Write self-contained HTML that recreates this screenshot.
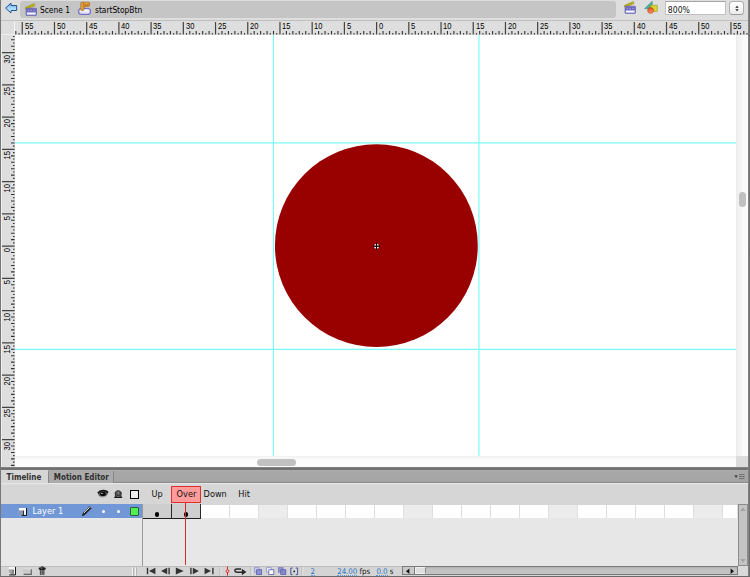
<!DOCTYPE html>
<html lang="en">
<head>
<meta charset="utf-8">
<title>startStopBtn</title>
<style>
html,body{margin:0;padding:0;}
body{width:750px;height:577px;overflow:hidden;position:relative;background:#dedede;
  font-family:"DejaVu Sans Condensed","DejaVu Sans","Liberation Sans",sans-serif;font-size:8.3px;color:#222;}
.abs,#app div,#app span,#app svg{position:absolute;}
#app{position:absolute;left:0;top:0;width:750px;height:577px;overflow:hidden;}

/* toolbar */
#toolbar{left:0;top:0;width:750px;height:20px;background:#dedede;}
#crumb{left:20.3px;top:1px;width:595.7px;height:16.6px;background:#c5c5c5;border-radius:3px;}
.tbtxt{top:5.2px;font-size:8.3px;line-height:10px;white-space:nowrap;color:#000;}
#tbline{left:0;top:20px;width:750px;height:1px;background:#c0c0c0;}
#zoomin{left:665.4px;top:1px;width:61px;height:14px;background:#fff;box-sizing:border-box;border:1px solid #c2c2c2;border-top-color:#a6a6a6;}
#zoomtx{left:667.8px;top:4.6px;font-size:8.6px;line-height:10px;color:#111;}
#stepper{left:729.4px;top:1px;width:14.2px;height:14.2px;box-sizing:border-box;border:1px solid #b0b0b0;border-bottom-color:#9c9c9c;border-radius:3.5px;background:linear-gradient(#ffffff,#ececec);}

/* rulers */
#hruler{left:14.5px;top:21px;width:733.5px;height:14px;background:#dedede;}
#rcorner{left:1px;top:21px;width:12.5px;height:13.3px;background:#dedede;}
#rcw1{left:13.5px;top:21px;width:1px;height:14px;background:#f4f4f4;}
#rcw2{left:1px;top:34px;width:13.5px;height:1px;background:#efefef;}
#vrw{left:1px;top:35px;width:1px;height:432px;background:#efefef;}
#vruler{left:1px;top:35px;width:13.5px;height:432px;background:#dedede;}
.hl{top:22px;font-family:"Liberation Sans",sans-serif;font-size:8.4px;line-height:9px;color:#000;transform-origin:0 0;transform:scaleX(0.9);}
.vl{left:3.3px;white-space:nowrap;font-family:"Liberation Sans",sans-serif;font-size:8.4px;line-height:9px;color:#000;}
.vl{transform-origin:0 0;transform:rotate(-90deg) scaleX(0.9) translateX(-100%);}

/* stage */
#stage{left:14.5px;top:35px;width:721.5px;height:421px;background:#fff;overflow:hidden;}
.gv{top:35px;width:1.3px;height:420.7px;background:#8ffcfc;}
.gh{left:14.5px;width:721.5px;height:1.2px;background:#8ffcfc;}
#vscroll{left:736px;top:35px;width:12px;height:421px;background:linear-gradient(90deg,#ececec,#fafafa 60%,#fcfcfc);}
#hscroll{left:14.5px;top:456px;width:721.5px;height:11px;background:linear-gradient(#f1f1f1 0,#fafafa 3px,#fdfdfd 7px,#fbfbfb 11px);}
#sccorner{left:736px;top:456px;width:12px;height:11px;background:#dcdcdc;}
.thumb{background:#c1c1c1;border-radius:4px;}

/* window borders */
#bl{left:0;top:0;width:1.1px;height:577px;background:#777;}
#br{left:748px;top:0;width:2px;height:577px;background:linear-gradient(90deg,#8a8a8a,#666);}
#bb{left:0;top:576px;width:750px;height:1px;background:#6a6a6a;}

/* timeline */
#sep{left:0;top:467px;width:750px;height:3px;background:linear-gradient(#8c8c8c,#686868 60%,#7c7c7c);}
#tabbar{left:1px;top:470px;width:747px;height:13.2px;background:linear-gradient(#9a9a9a 0,#b2b2b2 0.7px,#a8a8a8 1.6px,#a5a5a5 11.4px,#8d8d8d 12.2px,#8d8d8d 13.2px);}
#tab1{left:1px;top:470px;width:47px;height:14.6px;background:#d6d6d6;}
#tab2{left:48px;top:470.6px;width:66.4px;height:12.1px;background:#ababab;border-right:1px solid #888;border-left:1px solid #888;box-sizing:border-box;}
.tabtx{top:473.1px;font-family:"DejaVu Sans Condensed","DejaVu Sans",sans-serif;font-weight:bold;font-size:8px;line-height:10px;color:#303030;white-space:nowrap;}
#panel{left:1px;top:483.2px;width:747px;height:82.8px;background:linear-gradient(#e6e6e6 0,#e6e6e6 1.2px,#d6d6d6 1.6px,#d6d6d6 100%);}
#lempty{left:1px;top:518px;width:141px;height:48px;background:#e7e7e7;}
#fempty{left:143px;top:518px;width:595px;height:48px;background:#e7e7e7;}
#vdiv{left:142px;top:504px;width:1px;height:72px;background:#9a9a9a;}
#layer{left:1px;top:504.3px;width:141.3px;height:13.7px;background:#7197d6;}
#layertx{left:32.5px;top:506px;font-family:"DejaVu Sans","Liberation Sans",sans-serif;font-size:8.2px;line-height:11px;color:#fff;white-space:nowrap;}
#framerow{left:142.5px;top:504.6px;width:595.1px;height:13.5px;background:#fff;}
.fr,.fr5{top:504.6px;height:13.5px;box-sizing:border-box;border-right:1px solid #dedede;background:#fff;}
.fr5{background:#ececec;}
.kf{top:504.4px;height:14.2px;box-sizing:border-box;background:#cecece;border-right:1.2px solid #2a2a2a;border-bottom:1px solid #1e1e1e;}
.kdot{width:4.2px;height:4.2px;border-radius:50%;background:#000;top:512.4px;}
.flab{top:489.1px;font-family:"DejaVu Sans","Liberation Sans",sans-serif;font-size:8.2px;line-height:11px;color:#111;white-space:nowrap;}
#overbox{left:170.9px;top:486px;width:29.8px;height:16.5px;box-sizing:border-box;background:#ff9b9b;border:1px solid #de2f2f;}
#playhead{left:185.2px;top:502.5px;width:1px;height:62.5px;background:#d42a2a;}
#botbar{left:1px;top:566px;width:747px;height:9.5px;background:#d4d4d4;border-top:0.7px solid #bdbdbd;box-sizing:border-box;}
.stx{top:567.7px;font-size:7.8px;line-height:7.6px;white-space:nowrap;color:#222;}
.blue{color:#2b78ca;border-bottom:1px dotted #5a9ade;}
#tvscroll{left:738.3px;top:504px;width:9.7px;height:61.6px;box-sizing:border-box;background:#c4c4c4;border:1px solid #8c8c8c;}
#thscroll{left:402px;top:565.7px;width:335.6px;height:9.8px;box-sizing:border-box;background:linear-gradient(#adadad,#c2c2c2 2px,#c2c2c2);border:1px solid #7a7a7a;}
#thl{left:403px;top:566.7px;width:11.5px;height:7.8px;background:#c9c9c9;border-right:1px solid #7a7a7a;box-sizing:border-box;}
#thumb2{left:414.5px;top:566.7px;width:11.2px;height:7.8px;background:#dddddd;border:1px solid #f0f0f0;border-right-color:#8a8a8a;box-sizing:border-box;}
#tcorner{left:738px;top:566px;width:10px;height:9.5px;background:#dadada;}
</style>
</head>
<body>
<div id="app">

<!-- ===== toolbar ===== -->
<div id="toolbar"></div>
<div id="crumb"></div>
<svg id="backarrow" style="left:4px;top:1px" width="15" height="14" viewBox="0 0 15 14">
  <defs><linearGradient id="gArrow" x1="0" y1="0" x2="0" y2="1"><stop offset="0" stop-color="#63a7ea"/><stop offset="0.55" stop-color="#a8dcfb"/><stop offset="1" stop-color="#c6f2ff"/></linearGradient></defs>
  <path d="M1.6 7.1 L6.9 2.1 L7.2 4.5 L12.7 4.5 L12.7 9.5 L7.2 9.5 L6.9 11.9 Z" fill="url(#gArrow)" stroke="#244e8c" stroke-width="1" stroke-linejoin="round"/>
</svg>
<svg id="clap1" style="left:24.7px;top:2.6px" width="13" height="14" viewBox="0 0 13 14">
  <path d="M0.2 4.5 L9.3 0.5 L10.1 2.5 L1 6.5 Z" fill="#c7bb1d" stroke="#8c8610" stroke-width="0.5"/>
  <path d="M2.6 3.6 L3.3 5.3 M4.8 2.6 L5.5 4.3 M7 1.7 L7.7 3.4" stroke="#9c9414" stroke-width="0.7"/>
  <rect x="1" y="5.2" width="10.5" height="7.2" rx="0.7" fill="#7876c8" stroke="#5a58a8" stroke-width="0.6"/>
  <rect x="1.8" y="6.5" width="8.9" height="1.9" fill="#6563b6"/>
  <path d="M2.6 7 H4.2 V8 H2.6 Z M5.4 7 H7 V8 H5.4 Z M8.2 7 H9.8 V8 H8.2 Z" fill="#9d9be0"/>
  <rect x="1.9" y="9.5" width="8.7" height="2.1" fill="#f7f7ff"/>
</svg>
<span class="tbtxt" style="left:40px">Scene 1</span>
<svg id="btnicon" style="left:72px;top:0" width="30" height="18" viewBox="72 0 30 18">
  <defs><linearGradient id="gBtn" x1="0" y1="0" x2="0" y2="1"><stop offset="0" stop-color="#ffffff"/><stop offset="1" stop-color="#d6d6f6"/></linearGradient></defs>
  <rect x="78.7" y="8.6" width="11.7" height="5.8" rx="2.3" fill="url(#gBtn)" stroke="#7573c6" stroke-width="1.25"/>
  <path d="M80.8 2.7 Q81 2.1 82 2.2 L88.8 2.2 Q89.8 2.4 89.6 3.6 L89.6 5.4 Q89.4 6.6 88 6.6 L84.4 6.8 L83.8 10 Q83.4 10.8 82.4 10.8 L81.4 10.6 Q80.8 10.2 80.8 9.4 Z" fill="#d38c2a" stroke="#98590f" stroke-width="0.5"/>
  <path d="M82 3 V9.6 M84.4 3.2 H88.4" stroke="#efbf6c" stroke-width="0.7" fill="none"/>
  <path d="M83.6 3 V5.6 M85.6 4.2 V6.2 M87.6 4.2 V6.2" stroke="#a4661a" stroke-width="0.5" fill="none"/>
</svg>
<span class="tbtxt" style="left:95px">startStopBtn</span>

<svg id="clap2" style="left:624.2px;top:0.8px" width="13" height="14" viewBox="0 0 13 14">
  <path d="M0.2 4.5 L9.3 0.5 L10.1 2.5 L1 6.5 Z" fill="#c7bb1d" stroke="#8c8610" stroke-width="0.5"/>
  <path d="M2.6 3.6 L3.3 5.3 M4.8 2.6 L5.5 4.3 M7 1.7 L7.7 3.4" stroke="#9c9414" stroke-width="0.7"/>
  <rect x="1" y="5.2" width="10.5" height="7.2" rx="0.7" fill="#7876c8" stroke="#5a58a8" stroke-width="0.6"/>
  <rect x="1.8" y="6.5" width="8.9" height="1.9" fill="#6563b6"/>
  <path d="M2.6 7 H4.2 V8 H2.6 Z M5.4 7 H7 V8 H5.4 Z M8.2 7 H9.8 V8 H8.2 Z" fill="#9d9be0"/>
  <rect x="1.9" y="9.5" width="8.7" height="2.1" fill="#f7f7ff"/>
</svg>
<svg id="shapes" style="left:643px;top:-0.1px" width="16" height="16" viewBox="0 0 16 16">
  <defs><linearGradient id="gCirc" x1="0" y1="0" x2="0" y2="1"><stop offset="0" stop-color="#e44a1e"/><stop offset="1" stop-color="#f59468"/></linearGradient></defs>
  <path d="M1.6 8.6 L9.2 1.4 L9.2 8.6 Z" fill="#3fb59a" stroke="#2a8a78" stroke-width="0.6"/>
  <rect x="7.4" y="5.2" width="6.8" height="6.4" fill="#d8d432" stroke="#9a9618" stroke-width="0.6"/>
  <circle cx="7.6" cy="10.4" r="3" fill="url(#gCirc)" stroke="#b83c18" stroke-width="0.5"/>
</svg>
<div id="zoomin"></div>
<span id="zoomtx">800%</span>
<div id="stepper"></div>
<svg style="left:733.5px;top:4.6px" width="6" height="7" viewBox="0 0 6 7"><path d="M3 0.7 L4.7 2.7 H1.3 Z M3 6.3 L4.7 4.3 H1.3 Z" fill="#222"/></svg>
<div id="tbline"></div>

<!-- ===== rulers ===== -->
<div id="hruler"></div>
<div id="rcorner"></div><div id="rcw1"></div><div id="rcw2"></div>
<div id="vruler"></div><div id="vrw"></div>
<svg id="hticks" style="left:0;top:0" width="750" height="36" viewBox="0 0 750 36">
  <path d="M15.82 31V34.6M19.04 33V34.6M25.48 33V34.6M28.71 31V34.6M31.93 33V34.6M35.15 31V34.6M38.37 33V34.6M41.59 31V34.6M44.81 33V34.6M48.03 31V34.6M51.25 33V34.6M57.7 33V34.6M60.92 31V34.6M64.14 33V34.6M67.36 31V34.6M70.58 33V34.6M73.8 31V34.6M77.02 33V34.6M80.25 31V34.6M83.47 33V34.6M89.91 33V34.6M93.13 31V34.6M96.35 33V34.6M99.57 31V34.6M102.79 33V34.6M106.02 31V34.6M109.24 33V34.6M112.46 31V34.6M115.68 33V34.6M122.12 33V34.6M125.34 31V34.6M128.56 33V34.6M131.79 31V34.6M135.01 33V34.6M138.23 31V34.6M141.45 33V34.6M144.67 31V34.6M147.89 33V34.6M154.33 33V34.6M157.56 31V34.6M160.78 33V34.6M164 31V34.6M167.22 33V34.6M170.44 31V34.6M173.66 33V34.6M176.88 31V34.6M180.1 33V34.6M186.55 33V34.6M189.77 31V34.6M192.99 33V34.6M196.21 31V34.6M199.43 33V34.6M202.65 31V34.6M205.87 33V34.6M209.1 31V34.6M212.32 33V34.6M218.76 33V34.6M221.98 31V34.6M225.2 33V34.6M228.42 31V34.6M231.64 33V34.6M234.87 31V34.6M238.09 33V34.6M241.31 31V34.6M244.53 33V34.6M250.97 33V34.6M254.19 31V34.6M257.41 33V34.6M260.63 31V34.6M263.86 33V34.6M267.08 31V34.6M270.3 33V34.6M273.52 31V34.6M276.74 33V34.6M283.18 33V34.6M286.41 31V34.6M289.63 33V34.6M292.85 31V34.6M296.07 33V34.6M299.29 31V34.6M302.51 33V34.6M305.73 31V34.6M308.95 33V34.6M315.4 33V34.6M318.62 31V34.6M321.84 33V34.6M325.06 31V34.6M328.28 33V34.6M331.5 31V34.6M334.72 33V34.6M337.95 31V34.6M341.17 33V34.6M347.61 33V34.6M350.83 31V34.6M354.05 33V34.6M357.27 31V34.6M360.49 33V34.6M363.72 31V34.6M366.94 33V34.6M370.16 31V34.6M373.38 33V34.6M379.82 33V34.6M383.04 31V34.6M386.26 33V34.6M389.49 31V34.6M392.71 33V34.6M395.93 31V34.6M399.15 33V34.6M402.37 31V34.6M405.59 33V34.6M412.03 33V34.6M415.25 31V34.6M418.48 33V34.6M421.7 31V34.6M424.92 33V34.6M428.14 31V34.6M431.36 33V34.6M434.58 31V34.6M437.8 33V34.6M444.25 33V34.6M447.47 31V34.6M450.69 33V34.6M453.91 31V34.6M457.13 33V34.6M460.35 31V34.6M463.57 33V34.6M466.8 31V34.6M470.02 33V34.6M476.46 33V34.6M479.68 31V34.6M482.9 33V34.6M486.12 31V34.6M489.34 33V34.6M492.57 31V34.6M495.79 33V34.6M499.01 31V34.6M502.23 33V34.6M508.67 33V34.6M511.89 31V34.6M515.11 33V34.6M518.34 31V34.6M521.56 33V34.6M524.78 31V34.6M528 33V34.6M531.22 31V34.6M534.44 33V34.6M540.88 33V34.6M544.11 31V34.6M547.33 33V34.6M550.55 31V34.6M553.77 33V34.6M556.99 31V34.6M560.21 33V34.6M563.43 31V34.6M566.65 33V34.6M573.1 33V34.6M576.32 31V34.6M579.54 33V34.6M582.76 31V34.6M585.98 33V34.6M589.2 31V34.6M592.42 33V34.6M595.64 31V34.6M598.87 33V34.6M605.31 33V34.6M608.53 31V34.6M611.75 33V34.6M614.97 31V34.6M618.19 33V34.6M621.41 31V34.6M624.64 33V34.6M627.86 31V34.6M631.08 33V34.6M637.52 33V34.6M640.74 31V34.6M643.96 33V34.6M647.18 31V34.6M650.41 33V34.6M653.63 31V34.6M656.85 33V34.6M660.07 31V34.6M663.29 33V34.6M669.73 33V34.6M672.96 31V34.6M676.18 33V34.6M679.4 31V34.6M682.62 33V34.6M685.84 31V34.6M689.06 33V34.6M692.28 31V34.6M695.5 33V34.6M701.95 33V34.6M705.17 31V34.6M708.39 33V34.6M711.61 31V34.6M714.83 33V34.6M718.05 31V34.6M721.27 33V34.6M724.5 31V34.6M727.72 33V34.6M734.16 33V34.6M737.38 31V34.6M740.6 33V34.6M743.82 31V34.6M747.04 33V34.6" stroke="#333" stroke-width="1.1" fill="none"/>
  <path d="M22.26 22V34.6M54.48 22V34.6M86.69 22V34.6M118.9 22V34.6M151.11 22V34.6M183.33 22V34.6M215.54 22V34.6M247.75 22V34.6M279.96 22V34.6M312.18 22V34.6M344.39 22V34.6M376.6 22V34.6M408.81 22V34.6M441.03 22V34.6M473.24 22V34.6M505.45 22V34.6M537.66 22V34.6M569.88 22V34.6M602.09 22V34.6M634.3 22V34.6M666.51 22V34.6M698.73 22V34.6M730.94 22V34.6" stroke="#444" stroke-width="1.2" fill="none"/>
</svg>
<span class="hl" style="left:24.56px">55</span><span class="hl" style="left:56.78px">50</span><span class="hl" style="left:88.99px">45</span><span class="hl" style="left:121.2px">40</span><span class="hl" style="left:153.41px">35</span><span class="hl" style="left:185.63px">30</span><span class="hl" style="left:217.84px">25</span><span class="hl" style="left:250.05px">20</span><span class="hl" style="left:282.26px">15</span><span class="hl" style="left:314.48px">10</span><span class="hl" style="left:346.69px">5</span><span class="hl" style="left:378.9px">0</span><span class="hl" style="left:411.11px">5</span><span class="hl" style="left:443.33px">10</span><span class="hl" style="left:475.54px">15</span><span class="hl" style="left:507.75px">20</span><span class="hl" style="left:539.96px">25</span><span class="hl" style="left:572.17px">30</span><span class="hl" style="left:604.39px">35</span><span class="hl" style="left:636.6px">40</span><span class="hl" style="left:668.81px">45</span><span class="hl" style="left:701.02px">50</span><span class="hl" style="left:733.24px">55</span>

<!-- ===== stage ===== -->
<div id="stage"></div>
<svg id="guides" style="left:14px;top:35px" width="722" height="421" viewBox="14 35 722 421">
  <path d="M273.47 35V455.7M478.93 35V455.7M14.5 142.9H736M14.5 349.3H736" stroke="#7cf8f8" stroke-width="1.15" fill="none"/>
</svg>
<svg id="art" style="left:264px;top:134px" width="224" height="224" viewBox="264 134 224 224">
  <circle cx="376.35" cy="245.65" r="101.4" fill="#990000"/>
  <circle cx="376.5" cy="246.2" r="2.5" fill="#fff" fill-opacity="0.92"/>
  <path d="M373.2 246.2H379.8" stroke="#000" stroke-width="1.3"/><path d="M376.5 242.5V249.9" stroke="#000" stroke-width="1.05"/>
</svg>
<div id="vscroll"></div>
<div id="hscroll"></div>
<div id="sccorner"></div>
<div class="thumb" style="left:739.3px;top:192.3px;width:6.8px;height:14.6px"></div>
<div class="thumb" style="left:257px;top:459.1px;width:39.2px;height:6.7px"></div>
<svg id="vticks" style="left:0;top:0" width="16" height="468" viewBox="0 0 16 468">
  <path d="M13 36.54H14.6M11 39.76H14.6M13 42.99H14.6M11 46.21H14.6M13 49.44H14.6M13 55.88H14.6M11 59.11H14.6M13 62.33H14.6M11 65.56H14.6M13 68.78H14.6M11 72H14.6M13 75.23H14.6M11 78.45H14.6M13 81.68H14.6M13 88.12H14.6M11 91.35H14.6M13 94.57H14.6M11 97.8H14.6M13 101.02H14.6M11 104.24H14.6M13 107.47H14.6M11 110.69H14.6M13 113.92H14.6M13 120.36H14.6M11 123.59H14.6M13 126.81H14.6M11 130.04H14.6M13 133.26H14.6M11 136.48H14.6M13 139.71H14.6M11 142.93H14.6M13 146.16H14.6M13 152.6H14.6M11 155.83H14.6M13 159.05H14.6M11 162.28H14.6M13 165.5H14.6M11 168.72H14.6M13 171.95H14.6M11 175.17H14.6M13 178.4H14.6M13 184.84H14.6M11 188.07H14.6M13 191.29H14.6M11 194.52H14.6M13 197.74H14.6M11 200.96H14.6M13 204.19H14.6M11 207.41H14.6M13 210.64H14.6M13 217.08H14.6M11 220.31H14.6M13 223.53H14.6M11 226.76H14.6M13 229.98H14.6M11 233.2H14.6M13 236.43H14.6M11 239.65H14.6M13 242.88H14.6M13 249.32H14.6M11 252.55H14.6M13 255.77H14.6M11 259H14.6M13 262.22H14.6M11 265.44H14.6M13 268.67H14.6M11 271.89H14.6M13 275.12H14.6M13 281.56H14.6M11 284.79H14.6M13 288.01H14.6M11 291.24H14.6M13 294.46H14.6M11 297.68H14.6M13 300.91H14.6M11 304.13H14.6M13 307.36H14.6M13 313.8H14.6M11 317.03H14.6M13 320.25H14.6M11 323.48H14.6M13 326.7H14.6M11 329.92H14.6M13 333.15H14.6M11 336.37H14.6M13 339.6H14.6M13 346.04H14.6M11 349.27H14.6M13 352.49H14.6M11 355.72H14.6M13 358.94H14.6M11 362.16H14.6M13 365.39H14.6M11 368.61H14.6M13 371.84H14.6M13 378.28H14.6M11 381.51H14.6M13 384.73H14.6M11 387.96H14.6M13 391.18H14.6M11 394.4H14.6M13 397.63H14.6M11 400.85H14.6M13 404.08H14.6M13 410.52H14.6M11 413.75H14.6M13 416.97H14.6M11 420.2H14.6M13 423.42H14.6M11 426.64H14.6M13 429.87H14.6M11 433.09H14.6M13 436.32H14.6M13 442.76H14.6M11 445.99H14.6M13 449.21H14.6M11 452.44H14.6M13 455.66H14.6M11 458.88H14.6M13 462.11H14.6M11 465.33H14.6" stroke="#333" stroke-width="1.1" fill="none"/>
  <path d="M2 52.66H14.6M2 84.9H14.6M2 117.14H14.6M2 149.38H14.6M2 181.62H14.6M2 213.86H14.6M2 246.1H14.6M2 278.34H14.6M2 310.58H14.6M2 342.82H14.6M2 375.06H14.6M2 407.3H14.6M2 439.54H14.6" stroke="#444" stroke-width="1.2" fill="none"/>
</svg>
<span class="vl" style="top:54.76px">30</span><span class="vl" style="top:87px">25</span><span class="vl" style="top:119.24px">20</span><span class="vl" style="top:151.48px">15</span><span class="vl" style="top:183.72px">10</span><span class="vl" style="top:215.96px">5</span><span class="vl" style="top:248.2px">0</span><span class="vl" style="top:280.44px">5</span><span class="vl" style="top:312.68px">10</span><span class="vl" style="top:344.92px">15</span><span class="vl" style="top:377.16px">20</span><span class="vl" style="top:409.4px">25</span><span class="vl" style="top:441.64px">30</span>

<!-- ===== timeline ===== -->
<div id="sep"></div>
<div id="tabbar"></div>
<div id="tab1"></div>
<div id="tab2"></div>
<span class="tabtx" style="left:6.6px">Timeline</span>
<span class="tabtx" style="left:53.8px">Motion Editor</span>
<svg style="left:732.5px;top:472.6px" width="16" height="9" viewBox="0 0 16 9">
  <path d="M1.2 2.6 H5 L3.1 4.8 Z" fill="#333"/>
  <path d="M6 1.6H11.6M6 3.6H11.6M6 5.6H11.6" stroke="#6e6e6e" stroke-width="1"/>
</svg>
<div id="panel"></div>
<div id="lempty"></div>
<div id="fempty"></div>

<!-- header icons -->
<svg id="eye" style="left:97px;top:489.2px" width="12" height="11" viewBox="0 0 12 11">
  <path d="M1 4.2 C2.4 1 9 0.8 11 3.8 C10.6 7.4 4.4 9 1.6 6.2 Z" fill="#5c5c5c"/>
  <path d="M1.6 6.4 C3.6 8.8 8.4 8.4 10.4 5.6" stroke="#8a8a8a" stroke-width="0.8" fill="none"/>
  <ellipse cx="6" cy="4.9" rx="2.9" ry="2.1" fill="#0e0e0e"/>
  <path d="M0.9 4.2 C3 0.9 8.8 0.7 11.1 3.6" stroke="#1a1a1a" stroke-width="1.7" fill="none"/>
  <ellipse cx="4.9" cy="4.3" rx="0.9" ry="0.55" fill="#f2f2f2"/>
</svg>
<svg id="lock" style="left:113px;top:489.2px" width="11" height="11" viewBox="0 0 11 11">
  <defs><linearGradient id="gLock" x1="0" y1="0" x2="1" y2="0"><stop offset="0" stop-color="#2a2a2a"/><stop offset="0.5" stop-color="#7c7c7c"/><stop offset="1" stop-color="#2a2a2a"/></linearGradient></defs>
  <path d="M1.9 8.6 V4.8 C1.9 0.4 8.5 0.4 8.5 4.8 V8.6 Z" fill="url(#gLock)"/>
  <path d="M2.1 4.9 C2.1 0.7 8.3 0.7 8.3 4.9" stroke="#2c2c2c" stroke-width="0.9" fill="none"/>
  <path d="M3.8 5.6 H6.6 V7 H3.8 Z" fill="#3a3a3a"/>
  <path d="M1.2 8.4 H9.2" stroke="#141414" stroke-width="1.1"/>
</svg>
<div style="left:130px;top:490.2px;width:8.8px;height:8.6px;box-sizing:border-box;border:1.7px solid #000;background:#ececec"></div>

<!-- layer row -->
<div id="layer"></div>
<svg id="lyicon" style="left:18px;top:506px" width="10" height="11" viewBox="0 0 10 11">
  <rect x="0.9" y="2" width="7.6" height="7.3" fill="#f6f6f6"/>
  <rect x="0.9" y="4.4" width="4.6" height="4.9" fill="#8e96ac"/>
  <path d="M0.9 6.4 L3.8 9.3 H0.9 Z" fill="#7197d6"/>
  <path d="M8.5 2 V9.4 H3.6" stroke="#141414" stroke-width="1" fill="none"/>
  <path d="M5.5 4.6 V9.2" stroke="#222" stroke-width="0.9" fill="none"/>
</svg>
<span id="layertx">Layer 1</span>
<svg id="pencil" style="left:81px;top:505px" width="12" height="12" viewBox="0 0 12 12">
  <path d="M1.3 10.7 L2.3 7.9 L8.7 1.7 L10.2 3.2 L3.9 9.6 Z" fill="#1c1c1c" stroke="#1c1c1c" stroke-width="0.7" stroke-linejoin="round"/>
  <path d="M2.9 7.9 L8.7 2.3" stroke="#f4f4f4" stroke-width="1" fill="none"/>
  <path d="M9 1.6 L10.4 3" stroke="#7a7a7a" stroke-width="0.9"/>
</svg>
<div style="left:102px;top:510.2px;width:3px;height:3px;border-radius:50%;background:#fff"></div>
<div style="left:117.2px;top:510.2px;width:3px;height:3px;border-radius:50%;background:#fff"></div>
<div style="left:130px;top:507.2px;width:8.7px;height:8.8px;box-sizing:border-box;border:1px solid #2c5c3c;border-radius:1px;background:#50ee50"></div>

<!-- frames -->
<div id="framerow"></div>
<div class="fr" style="left:200.5px;width:29px"></div><div class="fr" style="left:229.5px;width:29px"></div><div class="fr5" style="left:258.5px;width:29px"></div><div class="fr" style="left:287.5px;width:29px"></div><div class="fr" style="left:316.5px;width:29px"></div><div class="fr" style="left:345.5px;width:29px"></div><div class="fr" style="left:374.5px;width:29px"></div><div class="fr5" style="left:403.5px;width:29px"></div><div class="fr" style="left:432.5px;width:29px"></div><div class="fr" style="left:461.5px;width:29px"></div><div class="fr" style="left:490.5px;width:29px"></div><div class="fr" style="left:519.5px;width:29px"></div><div class="fr5" style="left:548.5px;width:29px"></div><div class="fr" style="left:577.5px;width:29px"></div><div class="fr" style="left:606.5px;width:29px"></div><div class="fr" style="left:635.5px;width:29px"></div><div class="fr" style="left:664.5px;width:29px"></div><div class="fr5" style="left:693.5px;width:29px"></div><div class="fr" style="left:722.5px;width:15.1px"></div>
<div class="kf" style="left:142.4px;width:29.3px"></div>
<div class="kf" style="left:171.7px;width:29.2px"></div>
<div class="kdot" style="left:154.6px"></div>
<div class="kdot" style="left:183.6px"></div>
<span class="flab" style="left:151.6px">Up</span>
<div id="overbox"></div>
<span class="flab" style="left:176.6px">Over</span>
<span class="flab" style="left:203.6px">Down</span>
<span class="flab" style="left:238.3px">Hit</span>
<div id="vdiv"></div>
<div id="playhead"></div>
<div id="tvscroll"></div>
<svg style="left:739.3px;top:506px" width="8" height="58" viewBox="0 0 8 58">
  <path d="M3.9 1.6 L6.6 5 H1.2 Z M3.9 56.4 L6.6 53 H1.2 Z" fill="#a2a2a2"/>
</svg>

<!-- bottom bar -->
<div id="botbar"></div>
<div id="tcorner"></div>
<svg id="licons" style="left:6px;top:565px" width="44" height="12" viewBox="6 565 44 12">
  <rect x="8.9" y="566.9" width="6.6" height="7.8" fill="#f6f6f6"/>
  <rect x="8.9" y="569.4" width="4.3" height="5.3" fill="#a4a4a4"/>
  <path d="M8.9 572.2 L11.4 574.7 H8.9 Z" fill="#f4f4f4"/>
  <path d="M15.5 566.9 V574.9 H9.2" stroke="#161616" stroke-width="1" fill="none"/>
  <path d="M13.2 569.6 V574.4" stroke="#3a3a3a" stroke-width="0.8" fill="none"/>
  <path d="M23 568 H26.4 L27.2 568.9 H31.4 V574.3 H23 Z" fill="#cbcbcb"/>
  <path d="M23.2 568.3 H26.1 L26.9 569.1 H31" stroke="#ececec" stroke-width="0.6" fill="none"/>
  <path d="M31.3 569.2 V574.3 H23.6" stroke="#666" stroke-width="1.2" fill="none"/>
  <path d="M39.3 569 H45.1 L44.5 575.2 H39.9 Z" fill="#a2a2a2"/>
  <path d="M40.6 569.8 V574.8 M42.2 569.8 V574.8 M43.8 569.8 V574.8" stroke="#2e2e2e" stroke-width="0.8"/>
  <ellipse cx="42.2" cy="568.4" rx="3.6" ry="1.5" fill="#1e1e1e"/>
  <path d="M41 567.2 Q42.2 565.8 43.4 567.2" stroke="#1e1e1e" stroke-width="0.8" fill="none"/>
  <ellipse cx="41.6" cy="568" rx="1.2" ry="0.4" fill="#9a9a9a"/>
</svg>
<svg style="left:131px;top:567px" width="8" height="9" viewBox="0 0 8 9"><path d="M1.5 0.5V8.5M4.5 0.5V8.5" stroke="#f2f2f2" stroke-width="1"/><path d="M2.5 0.5V8.5M5.5 0.5V8.5" stroke="#b4b4b4" stroke-width="1"/></svg>
<svg id="ctrls" style="left:144px;top:566px" width="160" height="11" viewBox="144 566 160 11">
  <g fill="#333">
    <path d="M146.8 567.8 H148.2 V574.2 H146.8 Z M155.4 567.8 V574.2 L149 571 Z"/>
    <path d="M168.4 567.8 H169.8 V574.2 H168.4 Z M167.2 567.8 V574.2 L161 571 Z"/>
    <path d="M175.8 567.6 V574.4 L183.7 571 Z"/>
    <path d="M190.2 567.8 H191.6 V574.2 H190.2 Z M192.8 567.8 V574.2 L198.8 571 Z"/>
    <path d="M212.2 567.8 H213.6 V574.2 H212.2 Z M204.6 567.8 V574.2 L211 571 Z"/>
  </g>
  <path d="M220 566.8V575.4M251 566.8V575.4M302 566.8V575.4" stroke="#b0b0b0" stroke-width="1"/>
  <path d="M220.9 566.8V575.4M251.9 566.8V575.4M302.9 566.8V575.4" stroke="#f0f0f0" stroke-width="0.8"/>
  <path d="M227.5 566.6V575.6" stroke="#e02020" stroke-width="1"/>
  <circle cx="227.5" cy="571.2" r="1.4" fill="#f8d0d0" stroke="#e02020" stroke-width="0.9"/>
  <path d="M241 569 H237 C234.2 569 234.2 572.2 237 572.2 H242.4" stroke="#2a2a2a" stroke-width="1.4" fill="none"/>
  <path d="M241.8 568.8 L246.4 572 L241.8 575.2 Z" fill="#2a2a2a"/>
  <g stroke="#5a5ea8" stroke-width="0.8">
    <rect x="254.5" y="567.7" width="4.6" height="4.4" fill="#cdd0f2" stroke="#8e92d0"/>
    <rect x="256.6" y="569.8" width="5" height="4.6" fill="#8c90d4"/>
    <rect x="266.5" y="567.7" width="4.6" height="4.4" fill="#f4f4fc" stroke="#8e92d0"/>
    <rect x="268.8" y="569.8" width="5" height="4.6" fill="#ffffff"/>
    <rect x="278.5" y="567.7" width="4.6" height="4.4" fill="#9498d8" stroke="#7276c0"/>
    <rect x="280.8" y="569.8" width="5" height="4.6" fill="#8488cc"/>
  </g>
  <path d="M292.6 568 H290.8 V574.6 H292.6 M295.8 568 H297.6 V574.6 H295.8" stroke="#3a4a9a" stroke-width="0.9" fill="none"/>
  <circle cx="294.2" cy="571.4" r="0.9" fill="#222"/>
</svg>
<span class="stx blue" style="left:310.6px">2</span>
<span class="stx blue" style="left:337.2px">24.00</span>
<span class="stx" style="left:359.6px">fps</span>
<span class="stx blue" style="left:376.4px">0.0</span>
<span class="stx" style="left:389.8px">s</span>
<div id="thscroll"></div>
<div id="thl"></div>
<div id="thumb2"></div>
<svg style="left:405px;top:568px" width="6" height="7" viewBox="0 0 6 7"><path d="M4.4 0.6 V6 L1 3.3 Z" fill="#111"/></svg>
<svg style="left:729px;top:568px" width="6" height="7" viewBox="0 0 6 7"><path d="M1.6 0.6 V6 L5 3.3 Z" fill="#111"/></svg>

<!-- window borders -->
<div id="bl"></div>
<div id="br"></div>
<div id="bb"></div>
</div>
</body>
</html>
